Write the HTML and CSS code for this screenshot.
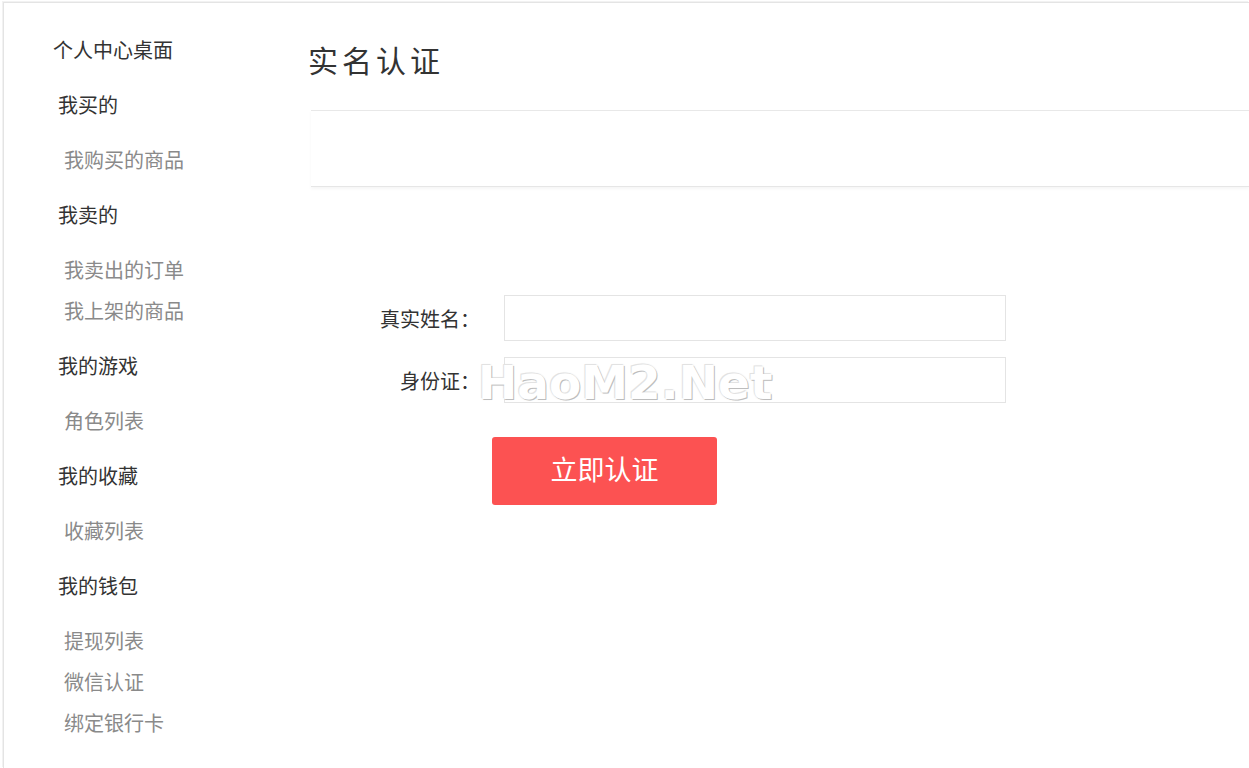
FILE: index.html
```html
<!DOCTYPE html>
<html lang="zh-CN">
<head>
<meta charset="utf-8">
<title>实名认证</title>
<link rel="stylesheet" href="styles.css">
</head>
<body>
<div class="page">
  <aside class="sidebar">
    <div class="nav-top">个人中心桌面</div>
    <div class="nav-group">
      <div class="nav-head">我买的</div>
      <ul class="nav-list"><li>我购买的商品</li></ul>
    </div>
    <div class="nav-group">
      <div class="nav-head">我卖的</div>
      <ul class="nav-list"><li>我卖出的订单</li><li>我上架的商品</li></ul>
    </div>
    <div class="nav-group">
      <div class="nav-head">我的游戏</div>
      <ul class="nav-list"><li>角色列表</li></ul>
    </div>
    <div class="nav-group">
      <div class="nav-head">我的收藏</div>
      <ul class="nav-list"><li>收藏列表</li></ul>
    </div>
    <div class="nav-group">
      <div class="nav-head">我的钱包</div>
      <ul class="nav-list"><li>提现列表</li><li>微信认证</li><li>绑定银行卡</li></ul>
    </div>
  </aside>
  <main class="main">
    <h1 class="title">实名认证</h1>
    <div class="tabbar"></div>
    <form class="form">
      <label class="label">真实姓名：</label>
      <input class="input" type="text">
      <label class="label">身份证：</label>
      <input class="input" type="text">
      <button class="submit" type="button">立即认证</button>
      <span class="watermark">HaoM2.Net</span>
    </form>
  </main>
</div>
</body>
</html>
```

FILE: styles.css
```css
* { box-sizing: border-box; }
html, body { margin: 0; padding: 0; background: #fff; }
body {
  font-family: "Noto Sans CJK SC", "Liberation Sans", sans-serif;
  color: #333;
  height: 768px;
  overflow: hidden;
}
.page {
  display: flex;
  margin: 2px 0 0 3px;
  border-top: 1px solid #e4e4e4;
  border-left: 1px solid #e4e4e4;
  box-shadow: -1px -1px 0 #f2f2f2;
  min-height: 766px;
}
.sidebar {
  width: 304px;
  flex: none;
  padding-top: 26px;
}
.nav-top, .nav-head, .nav-list li {
  font-size: 20px;
  line-height: 41px;
  white-space: nowrap;
}
.nav-top { padding-left: 49px; color: #333; margin-bottom: 14px; }
.nav-head { padding-left: 54px; color: #333; margin-bottom: 14px; }
.nav-list {
  list-style: none;
  margin: 0 0 14px;
  padding: 0 0 0 60px;
}
.nav-list li { color: #8a8a8a; }
.main {
  flex: 1;
  min-width: 0;
  padding-top: 36px;
}
.title {
  margin: 0;
  font-size: 30px;
  font-weight: normal;
  line-height: 40px;
  letter-spacing: 4px;
  color: #333;
}
.tabbar {
  margin: 31px 0 0 3px;
  height: 77px;
  border-top: 1px solid #e8e8e8;
  border-bottom: 1px solid #e6e6e6;
  box-shadow: 0 2px 3px rgba(0,0,0,0.04);
}
.form {
  position: relative;
  margin-top: 108px;
  display: grid;
  grid-template-columns: 172px 502px;
  column-gap: 24px;
  row-gap: 16px;
  align-items: center;
}
.label {
  font-size: 20px;
  color: #333;
  text-align: right;
  white-space: nowrap;
}
.input {
  height: 46px;
  border: 1px solid #e4e4e4;
  border-radius: 0;
  outline: none;
  padding: 0 10px;
  font-size: 18px;
  background: #fff;
}
.submit {
  grid-column: 1 / span 2;
  margin: 18px 0 0 184px;
  width: 225px;
  height: 68px;
  padding: 0 0 5px;
  border: none;
  border-radius: 3px;
  background: #fc5252;
  color: #fff;
  font-family: "Noto Sans CJK SC", sans-serif;
  font-size: 27px;
  cursor: pointer;
}
.watermark {
  position: absolute;
  left: 170px;
  top: 62px;
  font-family: "DejaVu Sans", sans-serif;
  font-weight: bold;
  font-size: 47px;
  line-height: 52px;
  color: #fff;
  text-shadow: 1px 1px 0 #bdbdbd, -1px -1px 0 #e2e2e2, 0 0 2px rgba(0,0,0,0.18);
  pointer-events: none;
}
```
